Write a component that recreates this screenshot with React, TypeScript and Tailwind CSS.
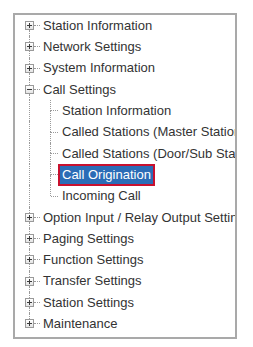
import React from "react";

type Node = { label: string; kind: "root" | "child"; icon?: "plus" | "minus"; selected?: boolean };

const items: Node[] = [
  { label: "Station Information", kind: "root", icon: "plus" },
  { label: "Network Settings", kind: "root", icon: "plus" },
  { label: "System Information", kind: "root", icon: "plus" },
  { label: "Call Settings", kind: "root", icon: "minus" },
  { label: "Station Information", kind: "child" },
  { label: "Called Stations (Master Stations)", kind: "child" },
  { label: "Called Stations (Door/Sub Stations)", kind: "child" },
  { label: "Call Origination", kind: "child", selected: true },
  { label: "Incoming Call", kind: "child" },
  { label: "Option Input / Relay Output Settings", kind: "root", icon: "plus" },
  { label: "Paging Settings", kind: "root", icon: "plus" },
  { label: "Function Settings", kind: "root", icon: "plus" },
  { label: "Transfer Settings", kind: "root", icon: "plus" },
  { label: "Station Settings", kind: "root", icon: "plus" },
  { label: "Maintenance", kind: "root", icon: "plus" },
];

function Expander({ type }: { type: "plus" | "minus" }) {
  return (
    <div className="w-[9px] h-[9px] border border-[#9a9a9a] bg-gradient-to-b from-white to-[#e4e4e4] flex items-center justify-center shrink-0">
      <svg width="7" height="7" viewBox="0 0 7 7">
        <rect x="1" y="3" width="5" height="1" fill="#3a3a3a" />
        {type === "plus" && <rect x="3" y="1" width="1" height="5" fill="#3a3a3a" />}
      </svg>
    </div>
  );
}

export default function App() {
  const lastChildIdx = 8;
  return (
    <div className="w-[253px] h-[347px] bg-white pt-[13px] pl-[13px]" style={{ fontFamily: '"Liberation Sans", Arial, sans-serif' }}>
      <div className="w-[224px] h-[326px] border-2 border-[#a9a9a9] bg-white overflow-hidden">
        {items.map((it, i) => {
          const first = i === 0;
          const last = i === items.length - 1;
          if (it.kind === "root") {
            return (
              <div key={i} className="h-[21.3px] flex items-stretch text-[13px] text-[#333333] whitespace-nowrap">
                <div className="w-[10px] shrink-0" />
                <div className="w-[9px] shrink-0 flex flex-col items-center">
                  <div className={`flex-1 w-0 ${first ? "" : "border-l border-dotted border-[#9a9a9a]"}`} />
                  <Expander type={it.icon!} />
                  <div className={`flex-1 w-0 ${last ? "" : "border-l border-dotted border-[#9a9a9a]"}`} />
                </div>
                <div className="flex items-center">
                  <div className="w-[6px] h-0 border-t border-dotted border-[#9a9a9a]" />
                </div>
                <div className="flex items-center pl-[3px]">{it.label}</div>
              </div>
            );
          }
          const lastChild = i === lastChildIdx;
          return (
            <div key={i} className="h-[21.3px] flex items-stretch text-[13px] text-[#333333] whitespace-nowrap">
              <div className="w-[10px] shrink-0" />
              <div className="w-[9px] shrink-0 flex justify-center">
                <div className="w-0 h-full border-l border-dotted border-[#9a9a9a]" />
              </div>
              <div className="w-[16px] shrink-0" />
              <div className="w-[1px] shrink-0 flex flex-col">
                <div className="flex-1 w-0 border-l border-dotted border-[#9a9a9a]" />
                <div className={`flex-1 w-0 ${lastChild ? "" : "border-l border-dotted border-[#9a9a9a]"}`} />
              </div>
              <div className="flex items-center">
                <div className="w-[7px] h-0 border-t border-dotted border-[#9a9a9a]" />
              </div>
              {it.selected ? (
                <div className="flex items-center">
                  <span className="h-[22px] flex items-center border-2 border-[#c8102e] bg-[#2b6cb6] text-white px-[2px]">{it.label}</span>
                </div>
              ) : (
                <div className="flex items-center pl-[4px]">{it.label}</div>
              )}
            </div>
          );
        })}
      </div>
    </div>
  );
}
